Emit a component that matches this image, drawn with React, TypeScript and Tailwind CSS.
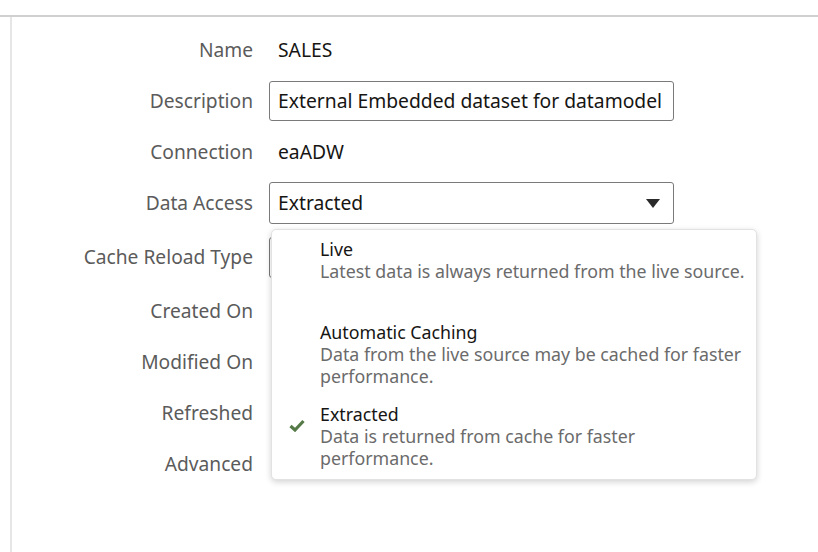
const font = { fontFamily: '"Noto Sans", "Open Sans", sans-serif' };

const options = [
  { title: "Live", desc: "Latest data is always returned from the live source.", selected: false },
  { title: "Automatic Caching", desc: "Data from the live source may be cached for faster performance.", selected: false },
  { title: "Extracted", desc: "Data is returned from cache for faster performance.", selected: true },
];

const Label = ({ children }: { children: React.ReactNode }) => (
  <div className="w-[241px] shrink-0 text-right text-[19.2px] text-[#5b5b5b] whitespace-nowrap">{children}</div>
);

const Row = ({ label, children, className = "" }: { label: string; children?: React.ReactNode; className?: string }) => (
  <div className={"flex items-center gap-4 " + className}>
    <Label>{label}</Label>
    <div className="flex-1">{children}</div>
  </div>
);

const CheckMark = () => (
  <svg width="16" height="13" viewBox="0 0 16 13">
    <path d="M1.5 7 L6 11 L14.5 2" fill="none" stroke="#557a48" strokeWidth="3.2" strokeLinejoin="miter" />
  </svg>
);

export default function App() {
  return (
    <div style={font} className="w-[818px] h-[552px] bg-white overflow-hidden flex flex-col">
      <div className="h-[15px] shrink-0" />
      <div className="h-[2px] bg-[#d0d0d0] shrink-0" />
      <div className="flex flex-1">
        <div className="w-[10px] shrink-0" />
        <div className="w-[2px] bg-[#e6e6e6] shrink-0" />
        <div className="relative flex-1 pt-[12px]">
          <div className="flex flex-col gap-[9px]">
            <Row label="Name" className="h-[42px]">
              <span className="pl-[9px] text-[19.3px] text-[#161513]">SALES</span>
            </Row>
            <Row label="Description" className="h-[42px]">
              <div className="w-[405px] h-[40px] border border-[#7a7a7a] rounded-[3px] flex items-center px-[8px] text-[19.3px] text-[#161513] whitespace-nowrap overflow-hidden">
                External Embedded dataset for datamodel
              </div>
            </Row>
            <Row label="Connection" className="h-[42px]">
              <span className="pl-[9px] text-[19.3px] text-[#161513]">eaADW</span>
            </Row>
            <Row label="Data Access" className="h-[42px]">
              <div className="w-[405px] h-[42px] border border-[#7a7a7a] rounded-[3px] flex items-center justify-between pl-[8px] pr-[13px] text-[19.3px] text-[#161513]">
                <span>Extracted</span>
                <svg width="14" height="9" viewBox="0 0 14 9">
                  <path d="M0 0 L14 0 L7 9 Z" fill="#2a2a2a" />
                </svg>
              </div>
            </Row>
            <Row label="Cache Reload Type" className="h-[48px]">
              <div className="w-[405px] h-[41px] border border-[#7a7a7a] rounded-[3px]" />
            </Row>
            <Row label="Created On" className="h-[42px]" />
            <Row label="Modified On" className="h-[42px]" />
            <Row label="Refreshed" className="h-[42px]" />
            <Row label="Advanced" className="h-[42px]" />
          </div>

          <div className="absolute left-[259px] top-[212px] w-[486px] h-[251px] bg-white rounded-[5px] border border-[#e2e2e2] shadow-[0_2px_6px_rgba(0,0,0,0.18)] pt-[8px] flex flex-col gap-[16.5px]">
            {options.map((o) => (
              <div key={o.title} className="flex min-h-[66px]">
                <div className="w-[48px] shrink-0 flex justify-center pt-[16px] pl-[2px]">
                  {o.selected && <CheckMark />}
                </div>
                <div className="flex flex-col w-[430px] text-[17.8px] leading-[22px]">
                  <span className="text-[#161513]">{o.title}</span>
                  <span className="text-[#6b6b6b]">{o.desc}</span>
                </div>
              </div>
            ))}
          </div>
        </div>
      </div>
    </div>
  );
}
